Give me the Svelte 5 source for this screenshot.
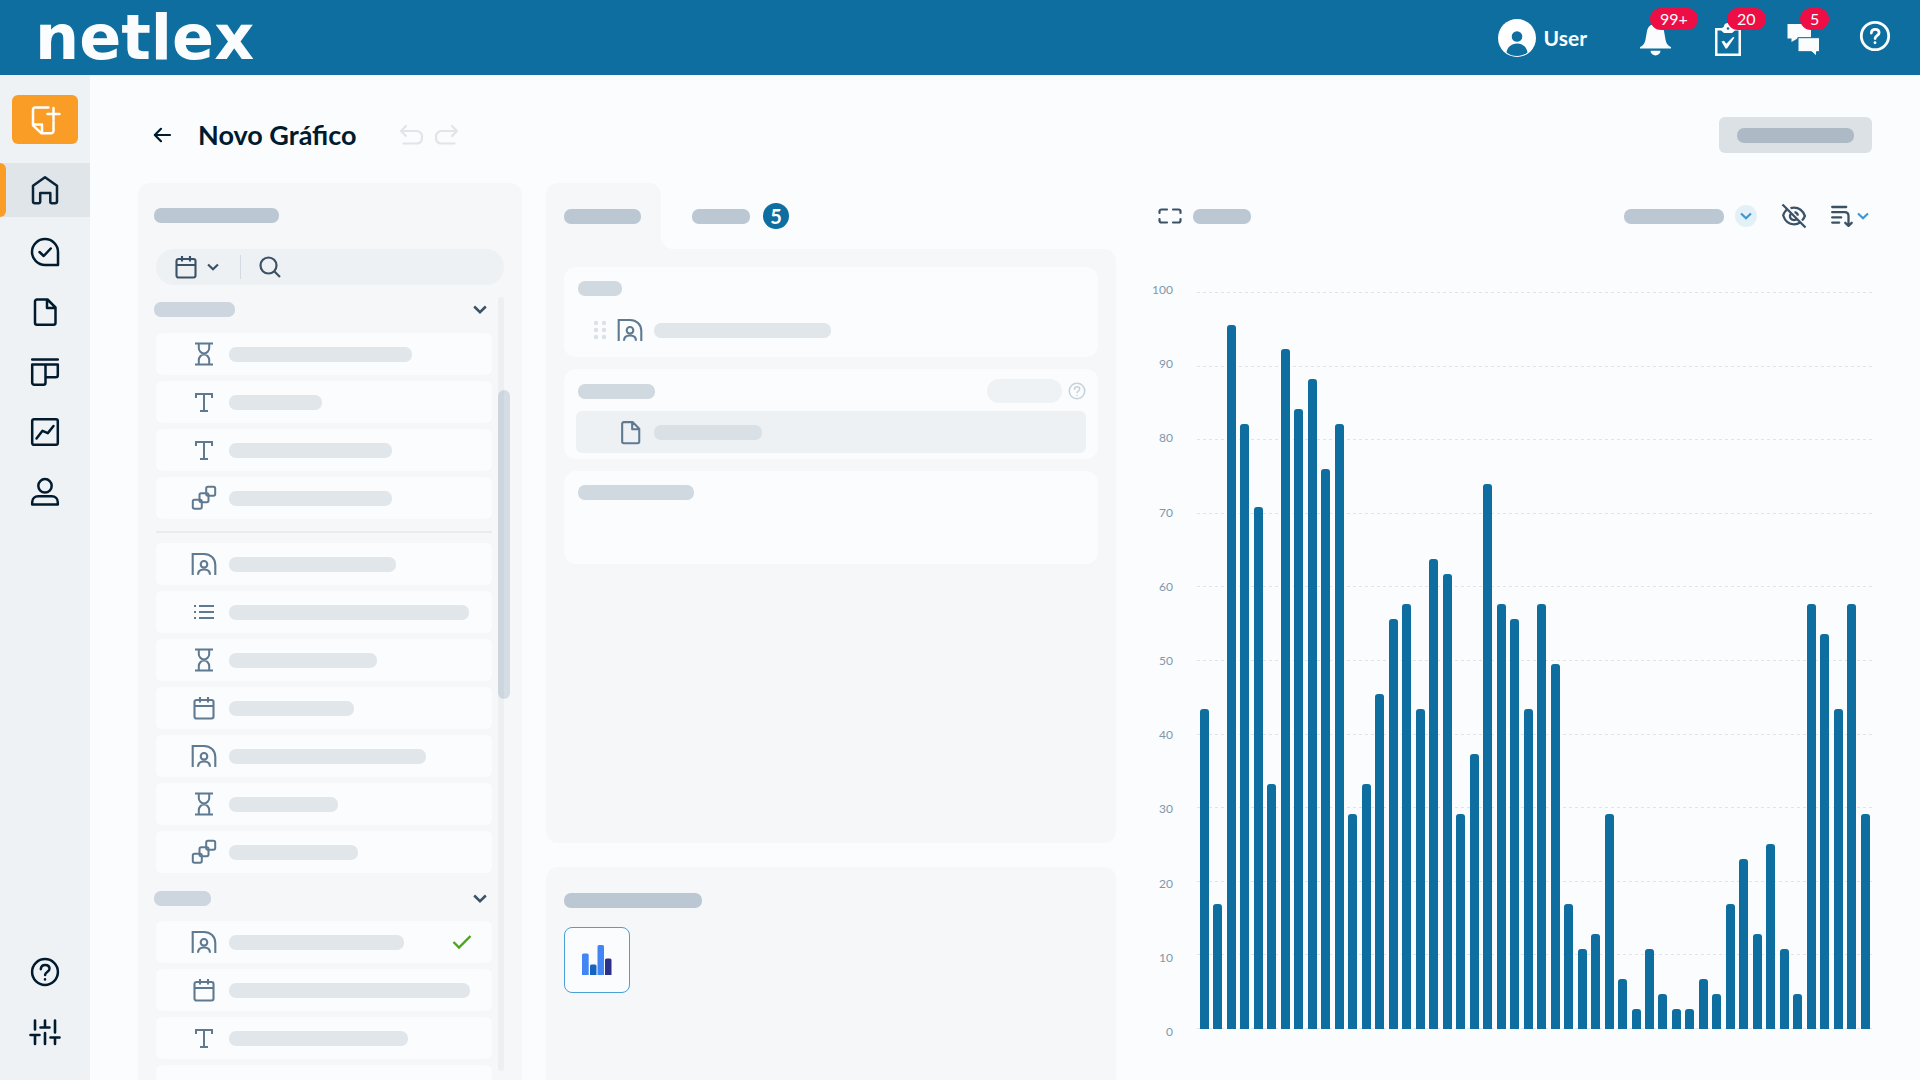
<script>
  const nav = [
    { icon: 'task', label: 'Tarefas' },
    { icon: 'file', label: 'Documentos' },
    { icon: 'board', label: 'Quadro' },
    { icon: 'report', label: 'Relatórios' },
    { icon: 'user', label: 'Usuários' }
  ];

  // An entry without an icon is a row that is still empty.
  const sections = [
    {
      title: 81,
      groups: [
        [
          { icon: 'hourglass', width: 183 },
          { icon: 'type', width: 93 },
          { icon: 'type', width: 163 },
          { icon: 'flow', width: 163 }
        ],
        [
          { icon: 'contact', width: 167 },
          { icon: 'list', width: 240 },
          { icon: 'hourglass', width: 148 },
          { icon: 'calendar', width: 125 },
          { icon: 'contact', width: 197 },
          { icon: 'hourglass', width: 109 },
          { icon: 'flow', width: 129 }
        ]
      ]
    },
    {
      title: 57,
      groups: [
        [
          { icon: 'contact', width: 175, checked: true },
          { icon: 'calendar', width: 241 },
          { icon: 'type', width: 179 },
          {}
        ]
      ]
    }
  ];

  const ticks = [100, 90, 80, 70, 60, 50, 40, 30, 20, 10, 0];
  const plotUnits = 737;
  const bars = [
    320, 125, 704, 605, 522, 245, 680, 620, 650, 560, 605, 215, 245, 335, 410, 425, 320, 470, 455,
    215, 275, 545, 425, 410, 320, 425, 365, 125, 80, 95, 215, 50, 20, 80, 35, 20, 20, 50, 35, 125,
    170, 95, 185, 80, 35, 425, 395, 320, 425, 215
  ];
</script>

{#snippet pill(width, tone)}
  <span class="pill {tone}" style="width: {width}px"></span>
{/snippet}

{#snippet chevron(width, height)}
  <svg class="line" {width} {height} viewBox="0 0 14 9" stroke-width="2.5"><path d="M1.2 1.5 7 7.2l5.8-5.7" /></svg>
{/snippet}

{#snippet icon(name)}
  {#if name === 'hourglass'}
    <svg class="line" width="24" height="24" viewBox="0 0 24 24" stroke-width="2">
      <path d="M3 1.5h18M3 22.5h18M6.8 1.5V6a5.2 5.4 0 0 0 10.4 0V1.5M6.8 22.5V18a5.2 5.4 0 0 1 10.4 0v4.5" />
    </svg>
  {:else if name === 'type'}
    <svg class="line" width="24" height="24" viewBox="0 0 24 24" stroke-width="2">
      <path d="M4 8V4h16v4M12 4v17M8 21h8" />
    </svg>
  {:else if name === 'flow'}
    <svg class="line round" width="26" height="26" viewBox="0 0 26 26" stroke-width="2">
      <rect x="1.8" y="14.800" width="9" height="9" rx="1.8" />
      <rect x="8.5" y="8.3" width="9" height="9" rx="1.8" />
      <rect x="15.2" y="1.8" width="9" height="9" rx="1.8" />
    </svg>
  {:else if name === 'contact'}
    <svg class="line" width="26" height="24" viewBox="0 0 26 24" stroke-width="2.1">
      <path d="M1.7 23V2H13c6.5 0 11.3 4.5 11.3 11v10M7 22.8c0-3.8 2-5.3 6-5.3s6 1.5 6 5.3" />
      <circle cx="13" cy="12.3" r="3.3" />
    </svg>
  {:else if name === 'list'}
    <svg class="line" width="24" height="24" viewBox="0 0 24 24" stroke-width="2">
      <path d="M2 6h2M7 6h15M2 12h2M7 12h15M2 18h2M7 18h15" />
    </svg>
  {:else if name === 'calendar'}
    <svg class="line" width="24" height="24" viewBox="0 0 24 24" stroke-width="2.1">
      <rect x="2.5" y="4" width="19" height="18.5" rx="2" />
      <path d="M2.5 10h19M8 1v5.5M16 1v5.5" />
    </svg>
  {:else if name === 'file'}
    <svg class="line round" width="30" height="30" viewBox="0 0 30 30" stroke-width="2.5">
      <path d="M17.500 2.5H7a2 2 0 0 0-2 2v21.300a2 2 0 0 0 2 2h16.500a2 2 0 0 0 2-2V10.500zM17 2.500v8.500h8.500" />
    </svg>
  {:else if name === 'task'}
    <svg class="line round" width="30" height="30" viewBox="0 0 30 30" stroke-width="2.5">
      <path d="M28 28H15A13 13 0 1 1 28 15zM9.5 15l4.2 4 7-7.5" />
    </svg>
  {:else if name === 'board'}
    <svg class="line round" width="30" height="30" viewBox="0 0 30 30" stroke-width="2.5">
      <path d="M2.2 2.500h25.600M2.2 7.500h25.600v10.700a2 2 0 0 1-2 2H15.500V7.500M2.200 7.500v18.300a2 2 0 0 0 2 2h9.300a2 2 0 0 0 2-2v-6" />
    </svg>
  {:else if name === 'report'}
    <svg class="line round" width="30" height="30" viewBox="0 0 30 30" stroke-width="2.5">
      <rect x="2.2" y="2.2" width="25.6" height="25.6" rx="1.8" />
      <path d="m6.5 21.500 6-7.700 5.300 2.300L23.500 9" />
    </svg>
  {:else if name === 'user'}
    <svg class="line round" width="30" height="30" viewBox="0 0 30 30" stroke-width="2.5">
      <circle cx="15" cy="8.8" r="6.7" />
      <path d="M2.2 27.500v-2.200c0-3.700 2.600-6 6-6h13.600c3.400 0 6 2.300 6 6v2.200z" />
    </svg>
  {:else if name === 'help'}
    <svg class="line round" width="30" height="30" viewBox="0 0 30 30" stroke-width="2.5">
      <circle cx="15" cy="15" r="12.9" />
      <path d="M10.8 12.200c.2-2.600 2-4.200 4.400-4.200 2.500 0 4.300 1.500 4.300 3.800 0 3.300-4.400 3.200-4.400 6.200M15 22.300v.2" />
    </svg>
  {/if}
{/snippet}

<div class="app">
  <header>
    <a class="logo" href="#home">netlex</a>
    <button class="account">
      <svg width="38" height="38" viewBox="0 0 38 38">
        <circle cx="19" cy="19" r="19" fill="#fff" />
        <circle class="blue" cx="19" cy="17.500" r="5.300" />
        <path class="blue" d="M8.500 33.500c.8-5.500 5-9 10.500-9s9.700 3.500 10.500 9C26.500 36 23 37 19 37s-7.500-1-10.500-3.500z" />
      </svg>
      User
    </button>
    <button class="tool" aria-label="Notificações">
      <svg width="32" height="39" viewBox="0 0 32 39">
        <path d="M0 30.500v-1.500c3.500-1.500 5-4 5.700-8.500L7 13c1-4.500 4-7 8.500-7s7.500 2.500 8.500 7l1.300 7.500c.7 4.500 2.200 7 5.700 8.500v1.500zM10.500 32.800h10a5 4.700 0 0 1-10 0z" />
      </svg>
      <span class="badge">99+</span>
    </button>
    <button class="tool" aria-label="Pendências">
      <svg width="32" height="39" viewBox="0 0 32 39">
        <path d="M2 10h7l2-1.500a4 3.500 0 0 1 8 0l2 1.500h7v28H2zm2.500 2.500v23h21v-23H22L19 15h-8l-3-2.500z" fill-rule="evenodd" />
        <circle class="blue" cx="15" cy="10.500" r="1.300" />
        <path d="m8.500 23.500 2.500-.8 2.300 3L20 19l1.500.5-7.500 11h-1.500z" />
      </svg>
      <span class="badge">20</span>
    </button>
    <button class="tool" aria-label="Mensagens">
      <svg width="32" height="39" viewBox="0 0 32 39">
        <path d="M1.500 6H25v13.500H11.500v1L5.500 24v-3.500h-4z" />
        <path class="cut" d="M12 19.700h21.500v14h-3V38l-5-4.300H12z" />
      </svg>
      <span class="badge">5</span>
    </button>
    <button class="tool" aria-label="Ajuda">
      <svg class="line round" width="32" height="39" viewBox="0 0 32 39" stroke-width="2.800">
        <circle cx="16" cy="18" r="13.700" />
        <path d="M12.300 15c.2-2.300 1.700-3.700 3.900-3.700 2.300 0 3.900 1.400 3.900 3.400 0 3-4 3-4 5.800M16 24.600v.2" />
      </svg>
    </button>
  </header>

  <div class="body">
    <nav>
      <button class="create" aria-label="Criar">
        <svg class="line round" width="30" height="30" viewBox="0 0 30 30" stroke-width="2.500">
          <path d="M18.500 2.500H5a2 2 0 0 0-2 2v15.800l8.500 8H21a2.500 2.500 0 0 0 2.500-2.500v-9.500M3.500 19.500H12v8.500M23.500 3v11.500M17.500 9h12" />
        </svg>
      </button>
      <a class="current" href="#home" aria-label="Início">
        <svg class="line round" width="30" height="30" viewBox="0 0 30 30" stroke-width="2.500">
          <path d="M3 10.800 15 2.300l12 8.500v15.400a2 2 0 0 1-2 2h-3.200a1.500 1.500 0 0 1-1.500-1.500v-8.700H10.200v8.700a1.500 1.500 0 0 1-1.500 1.500H5a2 2 0 0 1-2-2z" />
        </svg>
      </a>
      {#each nav as entry}
        <a href="#{entry.icon}" aria-label={entry.label}>{@render icon(entry.icon)}</a>
      {/each}
      <a class="bottom" href="#help" aria-label="Ajuda">{@render icon('help')}</a>
      <a href="#settings" aria-label="Configurações">
        <svg class="line round" width="32" height="28" viewBox="0 0 32 28" stroke-width="2.600">
          <path d="M6 2.500v9M1.500 17h9M6 17v9M16 2.500v7M11.500 9.500h9M16 15v11M26 2.500v12M21.500 19.500h9M26 19.500V26" />
        </svg>
      </a>
    </nav>

    <main>
      <div class="heading">
        <button class="back" aria-label="Voltar">
          <svg class="line round" width="18" height="18" viewBox="0 0 18 18" stroke-width="2.200"><path d="M17 9H2M8 2.800 1.800 9 8 15.200" /></svg>
        </button>
        <h1>Novo Gráfico</h1>
        <div class="history">
          <button aria-label="Desfazer">
            <svg class="line round" width="24" height="22" viewBox="0 0 24 22" stroke-width="2.200"><path d="M7 2 2 7l5 5M2 7h15.500a5.500 5.500 0 0 1 5.500 6.500c0 3.500-2 6-5.500 6H4.500" /></svg>
          </button>
          <button aria-label="Refazer">
            <svg class="line round" width="24" height="22" viewBox="0 0 24 22" stroke-width="2.200"><path d="m17 2 5 5-5 5M22 7H6.500A5.500 5.500 0 0 0 1 13.500c0 3.500 2 6 5.500 6h13" /></svg>
          </button>
        </div>
        <button class="save" aria-label="Salvar">{@render pill(117, 'deep')}</button>
      </div>

      <div class="columns">
        <section class="panel fields">
          {@render pill(125, 'strong')}
          <div class="search">
            <button aria-label="Tipo de campo">{@render icon('calendar')}{@render chevron(12, 8)}</button>
            <label for="field-search" aria-label="Buscar">
              <svg class="line" width="22" height="22" viewBox="0 0 22 22" stroke-width="2.200"><circle cx="9.500" cy="9.500" r="8" /><path d="m15 15 6 6" /></svg>
            </label>
            <input id="field-search" type="text" aria-label="Buscar campo" />
          </div>
          <div class="scroller">
            <div class="sections">
              {#each sections as section}
                <button class="toggle" aria-label="Recolher grupo">
                  {@render pill(section.title, 'medium')}
                  {@render chevron(14, 9)}
                </button>
                {#each section.groups as group}
                  <ul>
                    {#each group as item}
                      <li>
                        {#if item.icon}
                          <span class="glyph">{@render icon(item.icon)}</span>
                          {@render pill(item.width, 'light')}
                        {/if}
                        {#if item.checked}
                          <svg class="line done" width="20" height="16" viewBox="0 0 20 16" stroke-width="2.400"><path d="m1.500 8 5.500 5.500L18.500 2" /></svg>
                        {/if}
                      </li>
                    {/each}
                  </ul>
                {/each}
              {/each}
            </div>
            <div class="rail"><div class="thumb"></div></div>
          </div>
        </section>

        <div class="setup">
          <div class="tabs">
            <button class="tab active" aria-label="Dados">{@render pill(77, 'strong')}</button>
            <button class="tab" aria-label="Filtros">{@render pill(58, 'strong')}<span class="count">5</span></button>
          </div>
          <section class="panel data">
            <div class="card">
              {@render pill(44, 'soft')}
              <div class="slot">
                <svg class="grip" width="14" height="20" viewBox="0 0 14 20">
                  {#each [3, 10, 17] as y}<circle cx="3" cy={y} r="2.200" /><circle cx="11" cy={y} r="2.200" />{/each}
                </svg>
                <span class="glyph">{@render icon('contact')}</span>
                {@render pill(177, 'light')}
              </div>
            </div>
            <div class="card">
              <div class="card-head">
                {@render pill(77, 'soft')}
                <button class="option" aria-label="Opção"></button>
                <button class="hint" aria-label="Ajuda">{@render icon('help')}</button>
              </div>
              <div class="slot filled">
                <span class="glyph">{@render icon('file')}</span>
                {@render pill(108, 'mist')}
              </div>
            </div>
            <div class="card">{@render pill(116, 'soft')}</div>
          </section>
          <section class="panel kinds">
            {@render pill(138, 'strong')}
            <button class="kind" aria-label="Gráfico de colunas">
              <svg width="30" height="30" viewBox="0 0 30 30">
                <path fill="#4285f4" d="M0 30V10q0-1.500 1.500-1.500h3.700q1.500 0 1.500 1.500v20zM15.500 30V1.500Q15.500 0 17 0h3.500Q22 0 22 1.500V30z" />
                <path fill="#1565c0" d="M8 30V21q0-1.500 1.500-1.500H13q1.500 0 1.500 1.500v9z" />
                <path fill="#2b3089" d="M23 30V15q0-1.500 1.500-1.500H28q1.500 0 1.500 1.500v15z" />
              </svg>
            </button>
          </section>
        </div>

        <section class="chart">
          <div class="toolbar">
            <button aria-label="Expandir">
              <svg class="line round" width="24" height="16" viewBox="0 0 24 16" stroke-width="2.200">
                <path d="M1.500 5V3.500a2 2 0 0 1 2-2H9M15 1.500h5.500a2 2 0 0 1 2 2V5M22.500 11v1.500a2 2 0 0 1-2 2H15M9 14.500H3.500a2 2 0 0 1-2-2V11" />
              </svg>
            </button>
            {@render pill(58, 'strong')}
            <button class="picker" aria-label="Período">
              {@render pill(100, 'strong')}
              <span class="dot">{@render chevron(12, 8)}</span>
            </button>
            <button class="eye" aria-label="Ocultar">
              <svg class="line" width="24" height="24" viewBox="0 0 24 24" stroke-width="2.300">
                <path d="M.5.5l23 23M5.500 5C3.500 6.800 1.500 9.500 1.200 11.500 3 17 7 20.300 12 20.300c2.300 0 4.300-.6 6-1.800M8.500 4.200C9.600 3.900 10.800 3.700 12 3.700c5.200 0 9 3.300 10.900 8.300-.7 1.800-1.700 3.200-2.900 4.500M9.300 9.200a3.900 3.900 0 1 0 5.500 5.500M12.500 8.200a4 4 0 0 1 3.400 3.500" />
              </svg>
            </button>
            <button class="sort" aria-label="Ordenar">
              <svg class="line round" width="22" height="22" viewBox="0 0 22 22" stroke-width="2.300">
                <path d="M1.200 2h14M1.200 7.200h12.500q3.800 0 3.800 3.800v9.500M14.300 17.800l3.200 3 3.200-3M1.200 12.400h9M1.200 17.600h7" />
              </svg>
              {@render chevron(12, 8)}
            </button>
          </div>
          <div class="figure">
            <div class="axis">
              {#each ticks as tick}<span>{tick}</span>{/each}
            </div>
            <div class="plot">
              <div class="grid">
                {#each ticks as tick (tick)}<i></i>{/each}
              </div>
              <div class="bars">
                {#each bars as value}<i style="height: {(value / plotUnits) * 100}%"></i>{/each}
              </div>
            </div>
          </div>
        </section>
      </div>
    </main>
  </div>
</div>

<style>
  :global(body) {
    margin: 0;
    background: #fafcfe;
  }
  * {
    box-sizing: border-box;
  }
  .app {
    display: flex;
    flex-direction: column;
    height: 100vh;
    overflow: hidden;
    font-family: Lato, "Liberation Sans", sans-serif;
    color: #001a2e;
  }
  button {
    display: flex;
    align-items: center;
    padding: 0;
    border: 0;
    background: none;
    color: inherit;
    font: inherit;
    cursor: pointer;
  }
  svg {
    display: block;
    flex: none;
    overflow: visible;
    fill: currentColor;
  }
  svg.line {
    fill: none;
    stroke: currentColor;
  }
  svg.round {
    stroke-linecap: round;
    stroke-linejoin: round;
  }

  header {
    display: flex;
    flex: none;
    align-items: center;
    gap: 41px;
    height: 75px;
    padding: 0 29px 0 35px;
    background: #0e6e9f;
    color: #fafcfe;
  }
  .logo {
    margin-right: auto;
    color: inherit;
    font: 700 62px/75px "DejaVu Sans", sans-serif;
    text-decoration: none;
  }
  .account {
    gap: 8px;
    margin-right: 12px;
    font-size: 21px;
    font-weight: 700;
  }
  .blue {
    fill: #0e6e9f;
  }
  .cut {
    stroke: #0e6e9f;
    stroke-width: 1px;
  }
  .tool {
    position: relative;
  }
  .badge {
    position: absolute;
    top: -10px;
    left: 10px;
    padding: 0 10px;
    border-radius: 11px;
    background: #ed0e45;
    font-size: 16px;
    line-height: 22px;
  }
  .tool:nth-of-type(3) .badge,
  .tool:nth-of-type(4) .badge {
    left: 14px;
  }

  .body {
    display: flex;
    flex: 1;
    min-height: 0;
  }
  nav {
    display: flex;
    flex: none;
    flex-direction: column;
    width: 90px;
    padding: 20px 0 18px;
    background: #eef2f5;
  }
  nav a {
    display: flex;
    flex: none;
    align-items: center;
    justify-content: center;
    height: 60px;
    color: #001a2e;
  }
  .create {
    flex: none;
    justify-content: center;
    height: 49px;
    margin: 0 12px 19px;
    border-radius: 6px;
    background: #f99d27;
    color: #fff;
  }
  nav a.current {
    height: 54px;
    margin-bottom: 5px;
    background: #e0e5e9;
    color: #0a2438;
  }
  .current::before {
    width: 6px;
    height: 54px;
    margin-right: auto;
    border-radius: 0 6px 6px 0;
    background: #f99d27;
    content: "";
  }
  .current svg {
    margin-right: 30px;
  }
  nav a.bottom {
    margin-top: auto;
  }

  main {
    display: flex;
    flex: 1;
    flex-direction: column;
    min-width: 0;
    padding: 42px 48px 0;
  }
  .heading {
    display: flex;
    flex: none;
    align-items: center;
    height: 36px;
    margin-bottom: 30px;
    padding-left: 15px;
  }
  h1 {
    margin: 0 0 0 27px;
    font-size: 27px;
    font-weight: 700;
    line-height: 36px;
  }
  .history {
    display: flex;
    gap: 12px;
    margin-left: 42px;
    color: #e0e5e9;
  }
  .save {
    justify-content: center;
    width: 153px;
    height: 36px;
    margin-left: auto;
    border-radius: 6px;
    background: #dce1e5;
  }

  .pill {
    display: block;
    flex: none;
    height: 15px;
    border-radius: 7px;
  }
  .deep { background: #adbac6; }
  .strong { background: #bbc7d3; }
  .medium { background: #cdd5df; }
  .soft { background: #d0d8e0; }
  .mist { background: #d9e0e6; }
  .light { background: #e1e6ea; }

  .columns {
    display: grid;
    flex: 1;
    grid-template-columns: minmax(0, 384fr) minmax(0, 570fr) minmax(0, 732fr);
    grid-template-rows: minmax(0, 1fr);
    gap: 24px;
    min-height: 0;
  }
  .panel {
    border-radius: 12px;
    background: #f5f7f9;
  }

  .fields {
    display: flex;
    flex-direction: column;
    min-height: 0;
    padding: 25px 12px 0 16px;
    border-bottom-left-radius: 0;
    border-bottom-right-radius: 0;
  }
  .search {
    display: flex;
    flex: none;
    align-items: center;
    height: 36px;
    margin: 26px 6px 12px 2px;
    border-radius: 18px;
    background: #eef1f4;
    color: #3b5266;
  }
  .search button {
    gap: 9px;
    height: 24px;
    padding: 0 21px 0 18px;
    border-right: 1px solid #d3dae1;
  }
  .search label {
    padding: 0 12px 0 18px;
  }
  .search input {
    flex: 1;
    min-width: 0;
    border: 0;
    outline: 0;
    background: none;
    color: inherit;
    font: inherit;
  }
  .scroller {
    display: flex;
    flex: 1;
    gap: 6px;
    min-height: 0;
  }
  .sections {
    flex: 1;
    min-width: 0;
    overflow: hidden;
  }
  .toggle {
    justify-content: space-between;
    width: 100%;
    height: 24px;
    padding-right: 5px;
    color: #3b5266;
  }
  .toggle:not(:first-child) {
    margin-top: 13px;
    margin-bottom: -1px;
  }
  ul {
    display: grid;
    gap: 6px;
    margin: 12px 0 0 2px;
    padding: 0;
    list-style: none;
  }
  ul + ul {
    margin-top: 12px;
    padding-top: 10px;
    border-top: 2px solid #e9ecef;
  }
  li {
    display: flex;
    align-items: center;
    height: 42px;
    padding: 0 20px 0 35px;
    border-radius: 6px;
    background: #fafcfe;
  }
  .glyph {
    display: flex;
    flex: none;
    justify-content: center;
    width: 26px;
    margin-right: 12px;
    color: #5f7990;
  }
  .done {
    margin-left: auto;
    color: #4aa51c;
  }
  .rail {
    position: relative;
    width: 6px;
    margin-right: 6px;
    margin-bottom: 9px;
    border-radius: 3px;
    background: #edf0f3;
  }
  .thumb {
    position: absolute;
    top: 12%;
    left: 0;
    width: 12px;
    height: 40%;
    border-radius: 6px;
    background: linear-gradient(90deg, #cdd6de 50%, #d5dde4 50%);
  }

  .setup {
    display: flex;
    flex-direction: column;
    min-height: 0;
  }
  .tabs {
    display: flex;
    flex: none;
    height: 66px;
  }
  .tab {
    position: relative;
    gap: 13px;
    padding: 0 31px;
  }
  .tab.active {
    padding: 0 20px 0 18px;
    border-radius: 12px 12px 0 0;
    background: #f5f7f9;
  }
  .tab.active::after {
    position: absolute;
    bottom: 0;
    left: 100%;
    width: 12px;
    height: 12px;
    background: radial-gradient(circle at 100% 0, transparent 12px, #f5f7f9 12px);
    content: "";
  }
  .count {
    width: 26px;
    border-radius: 13px;
    background: #0e6e9f;
    color: #fff;
    font-size: 20px;
    font-weight: 700;
    line-height: 26px;
    text-align: center;
  }
  .data {
    display: flex;
    flex: 1;
    flex-direction: column;
    gap: 12px;
    min-height: 0;
    margin-bottom: 24px;
    padding: 18px;
    border-top-left-radius: 0;
  }
  .card {
    height: 90px;
    padding: 14px 12px 6px 14px;
    border-radius: 12px;
    background: #fafcfe;
  }
  .card:last-child {
    height: 93px;
  }
  .slot {
    display: flex;
    align-items: center;
    height: 42px;
    margin-top: 13px;
    padding-left: 15px;
  }
  .grip {
    margin-right: 10px;
    fill: #dce1e5;
  }
  .slot .glyph {
    margin-right: 11px;
  }
  .card-head {
    display: flex;
    align-items: center;
    height: 24px;
    margin-top: -4px;
  }
  .option {
    width: 75px;
    height: 24px;
    margin-left: auto;
    border-radius: 12px;
    background: #eef2f4;
  }
  .hint {
    margin-left: 6px;
    color: #c8d1d9;
  }
  .hint :global(svg) {
    width: 18px;
    height: 18px;
  }
  .slot.filled {
    margin-top: 8px;
    margin-left: -2px;
    padding-left: 41px;
    border-radius: 6px;
    background: #eef1f4;
  }
  .filled :global(svg) {
    width: 25px;
    height: 25px;
  }
  .kinds {
    flex: 0 1 213px;
    min-height: 0;
    padding: 26px 18px 0;
    border-bottom-left-radius: 0;
    border-bottom-right-radius: 0;
  }
  .kind {
    justify-content: center;
    width: 66px;
    height: 66px;
    margin-top: 19px;
    border: 1px solid #4a9fd4;
    border-radius: 8px;
    background: #fafcfe;
  }

  .chart {
    display: flex;
    flex-direction: column;
    min-height: 0;
    padding: 21px 0 40px 11px;
  }
  .toolbar {
    display: flex;
    flex: none;
    align-items: center;
    gap: 11px;
    height: 24px;
    margin-bottom: 54px;
    padding: 0 3px 0 7px;
    color: #3b5266;
  }
  .picker {
    gap: 11px;
    margin-left: auto;
  }
  .dot {
    display: flex;
    align-items: center;
    justify-content: center;
    width: 22px;
    height: 22px;
    border-radius: 11px;
    background: #e4f0f7;
    color: #3c97d3;
  }
  .eye {
    margin: 0 14px;
  }
  .sort {
    gap: 4px;
  }
  .sort :global(svg:last-child) {
    color: #3c97d3;
  }
  .figure {
    display: flex;
    flex: 1;
    gap: 24px;
    min-height: 0;
  }
  .axis {
    display: flex;
    flex: none;
    flex-direction: column;
    justify-content: space-between;
    width: 22px;
    color: #7f97ac;
    font-size: 12px;
    line-height: 16px;
    text-align: right;
  }
  .plot {
    display: grid;
    flex: 1;
    min-width: 0;
    margin: 10px 0 11px;
  }
  .grid,
  .bars {
    display: flex;
    grid-area: 1 / 1;
    justify-content: space-between;
    min-height: 0;
  }
  .grid {
    flex-direction: column;
  }
  .grid i {
    height: 1px;
    background: repeating-linear-gradient(90deg, #e0e4e8 0 3px, transparent 3px 6px);
  }
  .bars {
    align-items: flex-end;
    padding: 0 2px 0 3px;
  }
  .bars i {
    width: 9px;
    border-radius: 3px 3px 0 0;
    background: #0e6e9f;
  }
</style>
